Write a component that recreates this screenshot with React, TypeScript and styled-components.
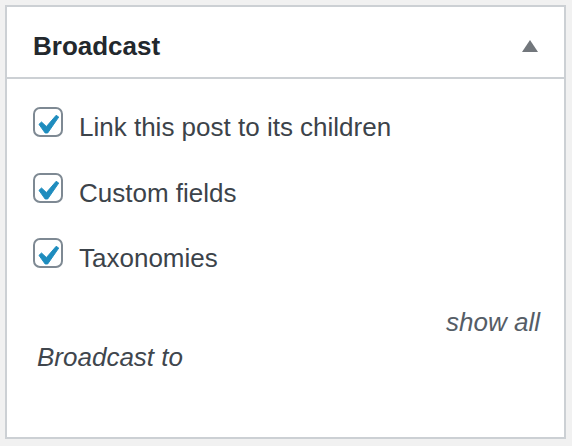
import styled, { createGlobalStyle } from "styled-components";

const GlobalStyle = createGlobalStyle`
	html, body {
		margin: 0;
		padding: 0;
		background: #f1f1f1;
		font-family: "Liberation Sans", Arial, sans-serif;
	}
`;

const Page = styled.div`
	padding: 5px 6px 7px 5px;
`;

const Panel = styled.section`
	box-sizing: border-box;
	height: 434px;
	background: #fff;
	border: 2px solid #ccd0d4;
`;

const Header = styled.header`
	box-sizing: border-box;
	height: 72px;
	padding: 7px 26px 0 26px;
	display: flex;
	align-items: center;
	justify-content: space-between;
	border-bottom: 2px solid #ccd0d4;
`;

const Title = styled.h2`
	margin: 0;
	font-size: 26px;
	line-height: 30px;
	font-weight: 700;
	color: #23282d;
`;

const Toggle = styled.span`
	width: 0;
	height: 0;
	border-left: 8px solid transparent;
	border-right: 8px solid transparent;
	border-bottom: 12px solid #72777c;
`;

const Body = styled.div`
	padding: 28px 24px 0 26px;
	display: flex;
	flex-direction: column;
`;

const Options = styled.div`
	display: flex;
	flex-direction: column;
	gap: 30.5px;
`;

const Row = styled.label`
	display: flex;
	align-items: flex-start;
	gap: 16px;
`;

const Box = styled.span`
	box-sizing: border-box;
	width: 30px;
	height: 30px;
	flex: none;
	border: 2px solid #7e8993;
	border-radius: 7px;
	display: flex;
	align-items: center;
	justify-content: center;

	svg {
		flex: none;
		width: 38px;
		height: 38px;
		margin: 6px 2px 0 0;
		overflow: visible;
	}
`;

const Label = styled.span`
	margin-top: 5px;
	font-size: 26px;
	line-height: 30px;
	color: #3c434a;
`;

const Note = styled.p<{ $align?: "left" | "right" }>`
	margin: 0;
	font-size: 26px;
	line-height: 30px;
	font-style: italic;
	text-align: ${p => p.$align ?? "left"};
	color: ${p => (p.$align === "right" ? "#555d66" : "#40464d")};
`;

const ShowAll = styled(Note)`
	margin-top: 34px;
`;

const Target = styled(Note)`
	margin-top: 5px;
	padding-left: 4px;
`;

const Check = () => (
	<svg viewBox="0 0 20 20">
		<path
			d="M14.83 4.89l1.34.94-5.81 8.38H9.02L5.78 9.67l1.34-1.25 2.57 2.4z"
			fill="#1e8cbe"
			stroke="#1e8cbe"
			strokeWidth="0.5"
			strokeLinejoin="round"
		/>
	</svg>
);

const options = ["Link this post to its children", "Custom fields", "Taxonomies"];

export default function App() {
	return (
		<Page>
			<GlobalStyle />
			<Panel>
				<Header>
					<Title>Broadcast</Title>
					<Toggle />
				</Header>
				<Body>
					<Options>
						{options.map(o => (
							<Row key={o}>
								<Box>
									<Check />
								</Box>
								<Label>{o}</Label>
							</Row>
						))}
					</Options>
					<ShowAll $align="right">show all</ShowAll>
					<Target>Broadcast to</Target>
				</Body>
			</Panel>
		</Page>
	);
}
